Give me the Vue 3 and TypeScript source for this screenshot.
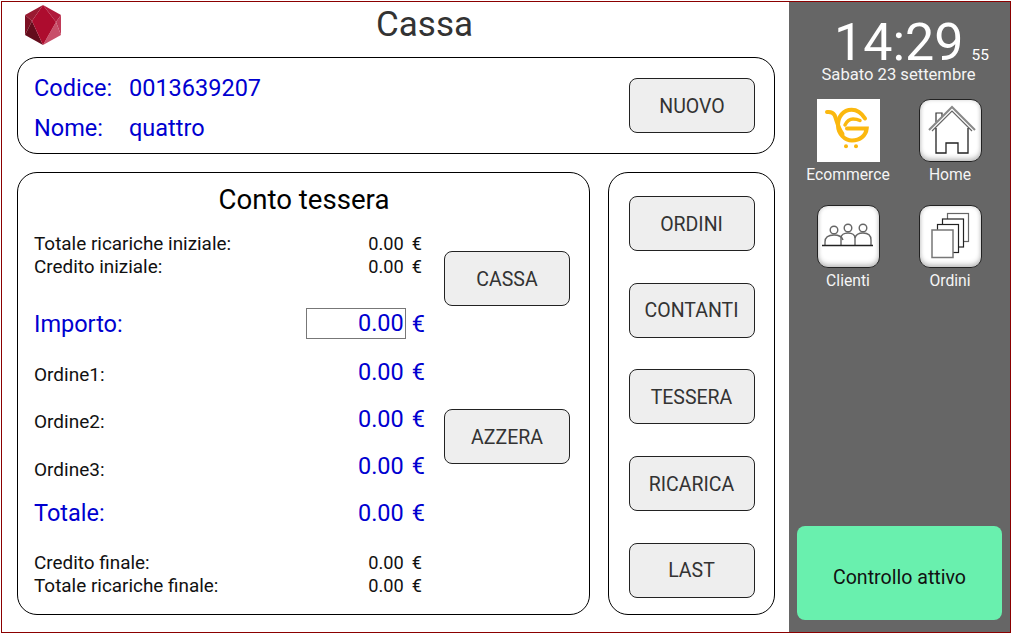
<script setup lang="ts">
const topRows = [
  { label: 'Totale ricariche iniziale:', value: '0.00' },
  { label: 'Credito iniziale:', value: '0.00' },
]
const orders = ['Ordine1:', 'Ordine2:', 'Ordine3:']
const bottomRows = [
  { label: 'Credito finale:', value: '0.00' },
  { label: 'Totale ricariche finale:', value: '0.00' },
]
const actions = ['ORDINI', 'CONTANTI', 'TESSERA', 'RICARICA', 'LAST']
</script>

<template>
  <div class="screen">
    <main class="main">
      <header class="header">
        <svg class="logo" viewBox="0 0 38 40" width="38" height="40">
          <polygon points="19,0 1,10 8,16" fill="#9a1a32" />
          <polygon points="1,10 1,30 8,16" fill="#7c1024" />
          <polygon points="1,30 19,40 8,16" fill="#640c1c" />
          <polygon points="19,0 37,10 32,17" fill="#b01a3c" />
          <polygon points="37,10 37,30 32,17" fill="#c03a58" />
          <polygon points="37,30 19,40 32,17" fill="#c8506a" />
          <polygon points="19,0 32,17 19,40 8,16" fill="#ad0c2e" />
        </svg>
        <h1>Cassa</h1>
      </header>

      <section class="card customer">
        <dl class="customer__data">
          <div><dt>Codice:</dt><dd>0013639207</dd></div>
          <div><dt>Nome:</dt><dd>quattro</dd></div>
        </dl>
        <button class="btn">NUOVO</button>
      </section>

      <div class="lower">
        <section class="card account">
          <h2>Conto tessera</h2>
          <div class="account__body">
            <div class="account__rows">
              <div class="small-rows">
                <div v-for="row in topRows" :key="row.label" class="row row--small">
                  <span>{{ row.label }}</span>
                  <span class="amount">{{ row.value }}<i>€</i></span>
                </div>
              </div>
              <div class="row row--big importo">
                <span>Importo:</span>
                <span class="amount">
                  <span class="input">0.00</span><i>€</i>
                </span>
              </div>
              <div v-for="order in orders" :key="order" class="row row--order">
                <span class="row__label">{{ order }}</span>
                <span class="amount">0.00<i>€</i></span>
              </div>
              <div class="row row--big total">
                <span>Totale:</span>
                <span class="amount">0.00<i>€</i></span>
              </div>
              <div class="small-rows final">
                <div v-for="row in bottomRows" :key="row.label" class="row row--small">
                  <span>{{ row.label }}</span>
                  <span class="amount">{{ row.value }}<i>€</i></span>
                </div>
              </div>
            </div>
            <div class="account__buttons">
              <button class="btn">CASSA</button>
              <button class="btn">AZZERA</button>
            </div>
          </div>
        </section>

        <section class="card actions">
          <button v-for="action in actions" :key="action" class="btn">{{ action }}</button>
        </section>
      </div>
    </main>

    <aside class="side">
      <div class="clock">14:29<small>55</small></div>
      <div class="date">Sabato 23 settembre</div>
      <div class="apps">
        <div class="app">
          <div class="app__tile app__tile--flat">
            <svg viewBox="0 0 63 63" width="63" height="63" fill="none" stroke="#fbb80f" stroke-linecap="round">
              <path d="M10 13c4-.5 6 .5 7.500 3 2 4 3 12 8 19" stroke-width="4" />
              <path d="M48 19.500C44 13 39 10.700 34.700 10.700 26 10.700 21 18 21 26c0 9 7 15.500 14 15.500 8 0 14-5 14.700-12H30" stroke-width="4" />
              <path d="M28 26c2-4 5-6 8-6 3 0 5 .5 7 1.500" stroke-width="3.500" />
              <circle cx="29" cy="47.300" r="2" fill="#fbb80f" stroke="none" />
              <circle cx="39" cy="47.300" r="2" fill="#fbb80f" stroke="none" />
            </svg>
          </div>
          <span>Ecommerce</span>
        </div>
        <div class="app">
          <div class="app__tile">
            <svg viewBox="0 0 61 61" width="61" height="61" fill="none" stroke="#555" stroke-width="1.200">
              <path d="M16 22V13h6v4" stroke="#333" />
              <path d="M9 30 32 7l23 23" stroke="#888" stroke-width="2" fill="#fff" />
              <path d="M12 31 32 11l20 20" stroke="#666" />
              <path d="M16 28v25h10V43h12v10h10V28" stroke="#222" stroke-width="1.300" />
            </svg>
          </div>
          <span>Home</span>
        </div>
        <div class="app">
          <div class="app__tile">
            <svg viewBox="0 0 61 61" width="61" height="61" fill="none" stroke="#666" stroke-width="1.400">
              <circle cx="16" cy="24" r="3.800" />
              <circle cx="30" cy="22" r="3.800" />
              <circle cx="45" cy="22" r="3.800" />
              <path d="M7 39v-3c0-5 4-7 9-7s8 2 9 5" />
              <path d="M23 39v-7c0-3 3-5 7-5s7 2 7 5v7" />
              <path d="M37 32c1-4 4-5 8-5 5 0 8 2 8 7v5" />
              <path d="M4 39.500h51" stroke="#222" />
            </svg>
          </div>
          <span>Clienti</span>
        </div>
        <div class="app">
          <div class="app__tile">
            <svg viewBox="0 0 61 61" width="61" height="61" fill="#fff" stroke="#444" stroke-width="1.200">
              <rect x="27.500" y="7.500" width="21" height="28" stroke="#666" />
              <rect x="22.500" y="13" width="21" height="28" stroke="#222" />
              <rect x="17.500" y="18.500" width="21" height="28" stroke="#222" />
              <rect x="12" y="24" width="21" height="27.500" stroke="#777" stroke-width="1.500" />
            </svg>
          </div>
          <span>Ordini</span>
        </div>
      </div>
      <div class="status">Controllo attivo</div>
    </aside>
  </div>
</template>

<style>
html,
body {
  margin: 0;
  background: #fff;
}
</style>

<style scoped>
.screen {
  box-sizing: border-box;
  width: 1010px;
  height: 632px;
  margin: 1px 0 0 1px;
  border: 1px solid #8b0000;
  display: flex;
  font-family: Roboto, sans-serif;
  overflow: hidden;
}

.main {
  width: 787px;
  padding: 0 14px 0 15px;
  box-sizing: border-box;
  display: flex;
  flex-direction: column;
}

.header {
  height: 55px;
  position: relative;
  flex: none;
}

.logo {
  position: absolute;
  left: 7px;
  top: 3px;
}

h1 {
  margin: 0;
  padding: 3px 0 0 57px;
  text-align: center;
  font-size: 35px;
  line-height: 40px;
  font-weight: 400;
  color: #333;
}

.card {
  box-sizing: border-box;
  border: 1px solid #000;
  border-radius: 20px;
}

.customer {
  height: 97px;
  display: flex;
  align-items: center;
  justify-content: space-between;
  padding: 0 19px 0 16px;
  flex: none;
}

.customer__data {
  margin: 4px 0 0;
  color: #0000d0;
  font-size: 23.500px;
}

.customer__data div {
  display: flex;
  height: 40px;
  align-items: center;
}

.customer__data dt {
  width: 95px;
}

.customer__data dd {
  margin: 0;
}

.btn {
  box-sizing: border-box;
  width: 126px;
  height: 55px;
  border: 1px solid #222;
  border-radius: 8px;
  background: #eee;
  color: #333;
  font-family: Roboto, sans-serif;
  font-size: 19.500px;
  padding: 1px 0 0;
}

.lower {
  display: flex;
  gap: 18px;
  margin-top: 18px;
  height: 443px;
}

.account {
  width: 573px;
  padding: 0 19px 0 16px;
}

h2 {
  margin: 0;
  height: 59px;
  padding: 10px 0 0 4px;
  box-sizing: border-box;
  text-align: center;
  font-size: 27.600px;
  line-height: 33px;
  font-weight: 400;
  color: #000;
}

.account__body {
  display: flex;
  justify-content: space-between;
}

.account__rows {
  width: 391px;
}

.row {
  display: flex;
  justify-content: space-between;
  align-items: center;
}

.row--small {
  height: 23px;
  font-size: 18.900px;
  color: #111;
}

.row--small .amount {
  font-size: 18.200px;
}

.row--small i {
  margin-left: 8px;
  margin-right: 3px;
}

.amount i {
  font-style: normal;
}

.importo {
  margin: 22px 0 1px;
  height: 47px;
}

.row--big {
  font-size: 23.500px;
  color: #0000d0;
}

.row--big .amount,
.row--order .amount {
  font-size: 23.500px;
  color: #0000d0;
}

.amount {
  display: flex;
  align-items: center;
}

.row--big i,
.row--order i {
  margin-left: 8px;
}

.input {
  box-sizing: border-box;
  width: 100px;
  height: 31px;
  border: 1px solid #777;
  text-align: right;
  line-height: 29px;
  padding-right: 1px;
}

.importo i {
  margin-left: 6px;
}

.row--order {
  height: 47.300px;
  font-size: 19px;
  color: #111;
}

.row__label {
  padding-top: 6px;
}

.total {
  height: 47px;
}

.final {
  margin-top: 14px;
}

.account__buttons {
  width: 126px;
  padding-top: 19px;
  display: flex;
  flex-direction: column;
  gap: 103px;
}

.actions {
  width: 167px;
  padding-top: 23px;
  display: flex;
  flex-direction: column;
  align-items: center;
  gap: 31.700px;
}

.side {
  flex: 1;
  background: #666;
  color: #fff;
  display: flex;
  flex-direction: column;
  align-items: stretch;
  position: relative;
}

.clock {
  margin-top: 15px;
  height: 50px;
  line-height: 52px;
  font-size: 52px;
  padding-left: 45px;
  white-space: nowrap;
}

.clock small {
  font-size: 15.500px;
  margin-left: 8px;
}

.date {
  text-align: center;
  font-size: 16.600px;
  line-height: 20px;
  margin-top: -2px;
  padding-right: 2px;
  color: #f4f4f4;
}

.apps {
  display: grid;
  grid-template-columns: 64px 64px;
  column-gap: 38px;
  row-gap: 20px;
  margin: 14px 0 0 27px;
}

.app {
  display: flex;
  flex-direction: column;
  align-items: center;
  font-size: 15.700px;
  line-height: 20px;
  color: #f5f5f5;
  white-space: nowrap;
}

.app span {
  margin-top: 3px;
}

.app__tile {
  box-sizing: border-box;
  width: 63px;
  height: 63px;
  border: 1px solid #222;
  border-radius: 11px;
  background: #fff;
  box-shadow: inset 0 -3px 5px rgba(0, 0, 0, 0.2), inset 0 0 4px rgba(0, 0, 0, 0.14);
  display: flex;
  align-items: center;
  justify-content: center;
}

.app__tile--flat {
  border: none;
  border-radius: 0;
  box-shadow: none;
}

.status {
  position: absolute;
  left: 8px;
  right: 8px;
  bottom: 12px;
  height: 94px;
  border-radius: 8px;
  background: #69f0ae;
  color: #111;
  font-size: 19.600px;
  display: flex;
  align-items: center;
  justify-content: center;
  padding-top: 8px;
  box-sizing: border-box;
}
</style>
